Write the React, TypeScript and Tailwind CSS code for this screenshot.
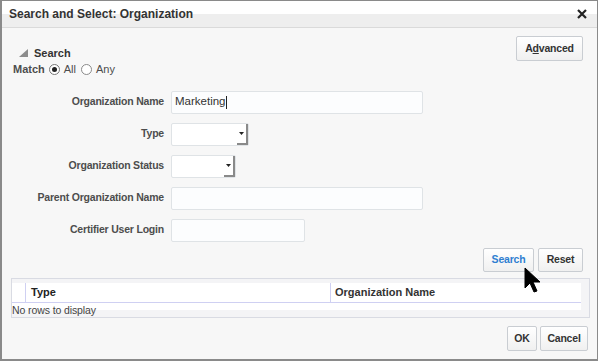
import React from "react";

const font = { fontFamily: '"Liberation Sans", Arial, sans-serif' };

function Btn({
  children,
  className = "",
  color = "text-[#333]",
}: {
  children: React.ReactNode;
  className?: string;
  color?: string;
}) {
  return (
    <div
      className={`flex items-center justify-center h-[24px] border border-[#c9cdd2] rounded-[2px] bg-[linear-gradient(#ffffff,#f0f0f0)] text-[10.5px] tracking-[-0.2px] font-bold ${color} ${className}`}
    >
      {children}
    </div>
  );
}

function Field({ label, children }: { label: string; children: React.ReactNode }) {
  return (
    <>
      <div className="h-[32px] flex items-center justify-end text-[10.5px] tracking-[-0.2px] font-bold text-[#4d4d4d]">{label}</div>
      <div className="h-[32px] flex items-center">{children}</div>
    </>
  );
}

function Select({ w }: { w: string }) {
  return (
    <div className={`${w} h-[23px] bg-white border border-[#dfe3e6] rounded-[2px] flex justify-end`}>
      <div className="w-[11px] h-full border-r-2 border-b-2 border-[#8a8a8a] flex items-center justify-center">
        <svg width="5" height="3" viewBox="0 0 5 3">
          <path d="M0 0h5L2.5 3z" fill="#222" />
        </svg>
      </div>
    </div>
  );
}

function Input({ w, value }: { w: string; value?: string }) {
  return (
    <div className={`${w} h-[23px] bg-[#fcfdfe] border border-[#dfe3e6] rounded-[2px] flex items-center pl-[3px] text-[11.5px] text-[#333]`}>
      {value}
      {value && <span className="w-px h-[13px] bg-[#222]" />}
    </div>
  );
}

export default function App() {
  return (
    <div style={font} className="w-[598px] h-[361px] bg-[#f7f7f7] border border-[#8a8a8a] border-l-2 border-b-2 flex flex-col relative overflow-hidden">
      {/* title bar */}
      <div className="h-[27px] shrink-0 flex items-center justify-between pl-[7px] pr-[10px] border-b border-[#dadada] bg-[linear-gradient(#ffffff_50%,#eeeeee_50%)]">
        <span className="text-[12px] font-bold text-[#333]">Search and Select: Organization</span>
        <svg width="10" height="10" viewBox="0 0 10 10">
          <path d="M1 1l8 8M9 1l-8 8" stroke="#222" strokeWidth="2.2" />
        </svg>
      </div>

      {/* search header */}
      <div className="h-[58px] shrink-0 flex justify-between pl-[11px] pr-[14px] pt-[8px]">
        <div className="pt-[9px] text-[11px] text-[#4d4d4d]">
          <div className="h-[16px] flex items-center gap-[6px] pl-[6px] font-bold">
            <svg width="9" height="8" viewBox="0 0 9 8">
              <path d="M9 0v8H0z" fill="#8c8c8c" />
            </svg>
            <span className="text-[#333]">Search</span>
          </div>
          <div className="h-[17px] flex items-center">
            <span className="font-bold">Match</span>
            <span className="ml-[4px] w-[11px] h-[11px] rounded-full border border-[#777] bg-white flex items-center justify-center">
              <span className="w-[5px] h-[5px] rounded-full bg-[#222]" />
            </span>
            <span className="ml-[4px]">All</span>
            <span className="ml-[5px] w-[11px] h-[11px] rounded-full border border-[#8a8a8a] bg-white" />
            <span className="ml-[4px]">Any</span>
          </div>
        </div>
        <Btn className="w-[67px] h-[25px]">
          A<span className="underline">d</span>vanced
        </Btn>
      </div>

      {/* form */}
      <div className="grid grid-cols-[162px_auto] gap-x-[7px] shrink-0">
        <Field label="Organization Name">
          <Input w="w-[252px]" value="Marketing" />
        </Field>
        <Field label="Type">
          <Select w="w-[78px]" />
        </Field>
        <Field label="Organization Status">
          <Select w="w-[65px]" />
        </Field>
        <Field label="Parent Organization Name">
          <Input w="w-[252px]" />
        </Field>
        <Field label="Certifier User Login">
          <Input w="w-[134px]" />
        </Field>
      </div>

      {/* search buttons */}
      <div className="mt-[2px] flex justify-end gap-[4px] pr-[14px]">
        <Btn className="w-[51px]" color="text-[#2f7fd1]">Search</Btn>
        <Btn className="w-[45px]">Reset</Btn>
      </div>

      {/* results table */}
      <div className="mt-[6px] ml-[9px] w-[579px] h-[40px] border border-[#d9dbe3] bg-[#f4f4f6] pt-[4px] text-[11px]">
        <div className="flex h-[20px] mr-[8px] bg-white border-b border-[#cfd0f2]">
          <div className="w-[14px] border-r border-[#cfd0f2]" />
          <div className="w-[305px] border-r border-[#cfd0f2] pl-[5px] flex items-center font-bold text-[#222]">Type</div>
          <div className="flex-1 pl-[4px] flex items-center font-bold text-[#333]">Organization Name</div>
        </div>
        <div className="relative h-[14px] mr-[8px]">
          <div className="h-[7px] bg-white" />
          <span className="absolute left-0 top-0 text-[10.5px] tracking-[-0.1px] leading-[14px] text-[#444]">No rows to display</span>
        </div>
      </div>

      {/* footer buttons */}
      <div className="mt-[8px] flex justify-end gap-[3px] pr-[9px]">
        <Btn className="w-[30px] h-[25px]">OK</Btn>
        <Btn className="w-[48px] h-[25px]">Cancel</Btn>
      </div>

      {/* mouse pointer */}
      <svg className="absolute left-[522px] top-[266px]" width="24" height="28" viewBox="0 0 24 28">
        <path d="M1 1v20l5-5 4 9 3-1-4-9h7z" fill="#000" stroke="#000" strokeWidth="1" />
      </svg>
    </div>
  );
}
